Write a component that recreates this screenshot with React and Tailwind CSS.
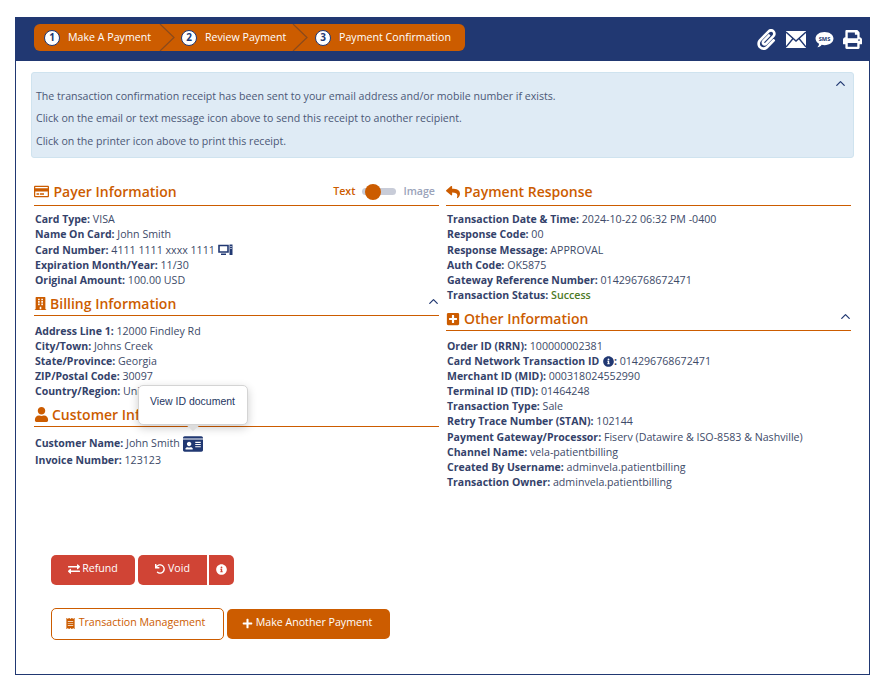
import React from 'react';
import {
  FaBuilding, FaUser, FaReply, FaPlusSquare, FaExchangeAlt, FaUndo, FaInfoCircle, FaPlus,
  FaReceipt, FaPaperclip, FaPrint, FaIdCard, FaRegCreditCard,
} from 'react-icons/fa';
import { LuChevronUp } from 'react-icons/lu';

const steps = [
  { n: 1, label: 'Make A Payment', cls: 'w-[126px] pl-[10px]' },
  { n: 2, label: 'Review Payment', cls: 'w-[133px] pl-[21px]' },
  { n: 3, label: 'Payment Confirmation', cls: 'flex-1 pl-[22px]' },
];

function Row({ label, children, tall }) {
  return (
    <div className={`whitespace-nowrap ${tall ? 'h-[16px] leading-[16px]' : 'h-[15px] leading-[15px]'}`}>
      <b className="font-bold text-[10.5px] text-[#34426a]">{label}</b> {children}
    </div>
  );
}

function SectionHead({ icon, title, children, first, gap = 'gap-[4px]' }) {
  return (
    <div className={`flex items-center justify-between border-b border-[#cc5c00] text-[#cc5c00] ${first ? 'h-[26px] pb-[2px]' : 'h-[24px] mt-[4px]'}`}>
      <div className={`flex items-center ${gap} text-[14px] font-semibold`}>
        {icon}
        <span>{title}</span>
      </div>
      {children}
    </div>
  );
}

function Chevron() {
  return <LuChevronUp className="text-[#213872] text-[15px] mb-[5px] mr-[-2px]" />;
}

export default function App() {
  return (
    <div className="w-[894px] h-[695px] bg-white pt-[17px] pl-[15px] font-['Open_Sans',sans-serif] text-[10.65px] text-[#3d4a68]">
      <div className="w-[855px] h-[658px] border border-t-0 border-[#213872] flex flex-col">
        {/* header bar */}
        <div className="h-[44px] bg-[#213872] -mx-px pl-[19px] pr-[8px] flex items-center justify-between shrink-0">
          <div className="w-[431px] h-[27px] mb-[3px] rounded-[6px] bg-[#cc5c00] flex text-white overflow-hidden">
            {steps.map((s, i) => (
              <div key={s.n} className={`${s.cls} relative flex items-center`}>
                <span className="w-[16px] h-[16px] rounded-full bg-white text-[#213872] text-[10px] font-bold flex items-center justify-center border border-[#213872] shrink-0">
                  {s.n}
                </span>
                <span className="ml-[8px] whitespace-nowrap">{s.label}</span>
                {i < 2 && (
                  <svg className="absolute right-[-15px] top-0 z-10" width="16" height="27" viewBox="0 0 16 27">
                    <path d="M1 0 L15 13.5 L1 27" fill="#cc5c00" stroke="#8a4a1c" strokeWidth="1.2" />
                  </svg>
                )}
              </div>
            ))}
          </div>
          <div className="flex items-center gap-[9px] text-white">
            <FaPaperclip className="text-[21px]" />
            <svg width="20" height="17" viewBox="0 0 20 17">
              <rect width="20" height="17" fill="#fff" />
              <path d="M0 1 L10 10 L20 1 M0 16 L7 7.5 M20 16 L13 7.5" fill="none" stroke="#213872" strokeWidth="1.4" />
            </svg>
            <svg width="19" height="17" viewBox="0 0 20 18">
              <path d="M10 1 C15.5 1 19.5 4 19.5 8 C19.5 12 15.5 15 10 15 C8.8 15 8 14.9 7 14.6 C6 16 4.5 17 2.5 17.3 C3.7 16 4.2 14.7 4.2 13.6 C1.9 12.3 .5 10.3 .5 8 C.5 4 4.5 1 10 1 Z" fill="#fff" />
              <text x="10" y="10.5" textAnchor="middle" fontSize="6" fontWeight="700" fill="#213872">SMS</text>
            </svg>
            <FaPrint className="text-[19px]" />
          </div>
        </div>

        {/* notice */}
        <div className="relative mt-[11px] mx-[15px] h-[86px] rounded-[3px] border border-[#cfe3ef] bg-[#dfebf5] pl-[4px] pt-[16px] text-[10.6px] text-[#4b5877] shrink-0">
          <p className="h-[22px] leading-[14px]">The transaction confirmation receipt has been sent to your email address and/or mobile number if exists.</p>
          <p className="h-[23px] leading-[14px]">Click on the email or text message icon above to send this receipt to another recipient.</p>
          <p className="leading-[14px]">Click on the printer icon above to print this receipt.</p>
          <LuChevronUp className="absolute right-[5px] top-[3px] text-[#213872] text-[15px]" />
        </div>

        {/* two columns */}
        <div className="flex pl-[18px] mt-[22px] gap-[7px]">
          <div className="w-[405px]">
            <SectionHead first gap="gap-[4.5px]" icon={<FaRegCreditCard className="text-[15px]" />} title="Payer Information">
              <div className="flex items-center font-semibold mr-[4px]">
                <span>Text</span>
                <span className="relative w-[34px] h-[7px] rounded-full bg-[#c8ccd8] mx-[7px]">
                  <span className="absolute left-[3px] top-[-4px] w-[16px] h-[16px] rounded-full bg-[#cc5c00]" />
                </span>
                <span className="text-[#9aa3ba]">Image</span>
              </div>
            </SectionHead>
            <div className="pl-[1px] pt-[6px]">
              <Row label="Card Type:">VISA</Row>
              <Row label="Name On Card:">John Smith</Row>
              <Row label="Card Number:" tall>
                4111 1111 xxxx 1111{' '}
                <svg className="inline mb-[2px]" width="15" height="12" viewBox="0 0 15 12">
                  <path d="M1 1.5 H10 V8 H1 Z" fill="none" stroke="#213872" strokeWidth="1.6" />
                  <path d="M3 11 H8 V9.5 H3 Z" fill="#213872" />
                  <path d="M11.5 .5 H14.5 V11 H11.5 Z" fill="#213872" />
                  <path d="M12.3 2.5 H13.7 M12.3 4.5 H13.7" stroke="#fff" strokeWidth=".8" />
                </svg>
              </Row>
              <Row label="Expiration Month/Year:">11/30</Row>
              <Row label="Original Amount:">100.00 USD</Row>
            </div>
            <SectionHead gap="gap-[3px]" icon={<FaBuilding className="text-[13px]" />} title="Billing Information">
              <Chevron />
            </SectionHead>
            <div className="pl-[1px] pt-[8px]">
              <Row label="Address Line 1:">12000 Findley Rd</Row>
              <Row label="City/Town:">Johns Creek</Row>
              <Row label="State/Province:">Georgia</Row>
              <Row label="ZIP/Postal Code:">30097</Row>
              <Row label="Country/Region:">United States</Row>
            </div>
            <SectionHead gap="gap-[3px]" icon={<FaUser className="text-[15px]" />} title="Customer Information" />
            <div className="pl-[1px] pt-[8px]">
              <div className="h-[18px] leading-[17px] relative whitespace-nowrap">
                <b className="font-bold text-[10.5px] text-[#34426a]">Customer Name:</b> John Smith{' '}
                <FaIdCard className="inline text-[#213872] text-[20px] -my-[3px]" />
                <div className="absolute left-[103px] top-[-50px] w-[110px] h-[40px] rounded-[5px] bg-white border border-[#d4d4d4] shadow-[0_3px_10px_rgba(0,0,0,0.2)] font-['Liberation_Sans',sans-serif] text-[10.5px] text-[#26365f] pl-[11px] pt-[8px] leading-[14px]">
                  View ID document
                  <span className="absolute left-[47px] bottom-[-7px] w-0 h-0 border-x-[7px] border-x-transparent border-t-[6px] border-t-[#dcdcdc]" />
                </div>
              </div>
              <Row label="Invoice Number:">123123</Row>
            </div>
          </div>

          <div className="w-[405px]">
            <SectionHead first icon={<FaReply className="text-[14px]" />} title="Payment Response" />
            <div className="pl-[1px] pt-[6px]">
              <Row label="Transaction Date & Time:">2024-10-22 06:32 PM -0400</Row>
              <Row label="Response Code:">00</Row>
              <Row label="Response Message:" tall>APPROVAL</Row>
              <Row label="Auth Code:">OK5875</Row>
              <Row label="Gateway Reference Number:">014296768672471</Row>
              <Row label="Transaction Status:"><span className="font-semibold text-[#4e7a27]">Success</span></Row>
            </div>
            <SectionHead icon={<FaPlusSquare className="text-[14px]" />} title="Other Information">
              <Chevron />
            </SectionHead>
            <div className="pl-[1px] pt-[8px]">
              <Row label="Order ID (RRN):">100000002381</Row>
              <Row label="Card Network Transaction ID">
                <FaInfoCircle className="inline text-[#213872] text-[11px] mb-[2px] ml-[1px]" />
                <b className="font-bold text-[10.5px] text-[#34426a]">:</b> 014296768672471
              </Row>
              <Row label="Merchant ID (MID):">000318024552990</Row>
              <Row label="Terminal ID (TID):">01464248</Row>
              <Row label="Transaction Type:">Sale</Row>
              <Row label="Retry Trace Number (STAN):">102144</Row>
              <Row label="Payment Gateway/Processor:" tall>Fiserv (Datawire &amp; ISO-8583 &amp; Nashville)</Row>
              <Row label="Channel Name:">vela-patientbilling</Row>
              <Row label="Created By Username:">adminvela.patientbilling</Row>
              <Row label="Transaction Owner:">adminvela.patientbilling</Row>
            </div>
          </div>
        </div>

        {/* actions */}
        <div className="mt-auto pl-[35px] pb-[34px]">
          <div className="flex text-white h-[30px]">
            <button className="w-[84px] pb-[2px] rounded-[5px] bg-[#d04435] flex items-center justify-center gap-[2px]">
              <FaExchangeAlt className="text-[12px]" /> Refund
            </button>
            <button className="w-[69px] pb-[2px] ml-[3px] rounded-l-[5px] bg-[#d04435] flex items-center justify-center gap-[3px]">
              <FaUndo className="text-[10px]" /> Void
            </button>
            <button className="w-[25px] pb-[2px] ml-[2px] rounded-r-[5px] bg-[#d04435] flex items-center justify-center">
              <FaInfoCircle className="text-[11px]" />
            </button>
          </div>
          <div className="flex mt-[23px] items-center">
            <button className="w-[173px] h-[32px] pb-[2px] rounded-[5px] border border-[#cc5c00] bg-white text-[#cc5c00] flex items-center justify-center gap-[3px]">
              <FaReceipt className="text-[11px] -ml-[5px]" /> Transaction Management
            </button>
            <button className="w-[163px] h-[30px] pb-[2px] ml-[3px] rounded-[5px] bg-[#cc5c00] text-white flex items-center justify-center gap-[3px]">
              <FaPlus className="text-[11px] -ml-[3px]" /> Make Another Payment
            </button>
          </div>
        </div>
      </div>
    </div>
  );
}
